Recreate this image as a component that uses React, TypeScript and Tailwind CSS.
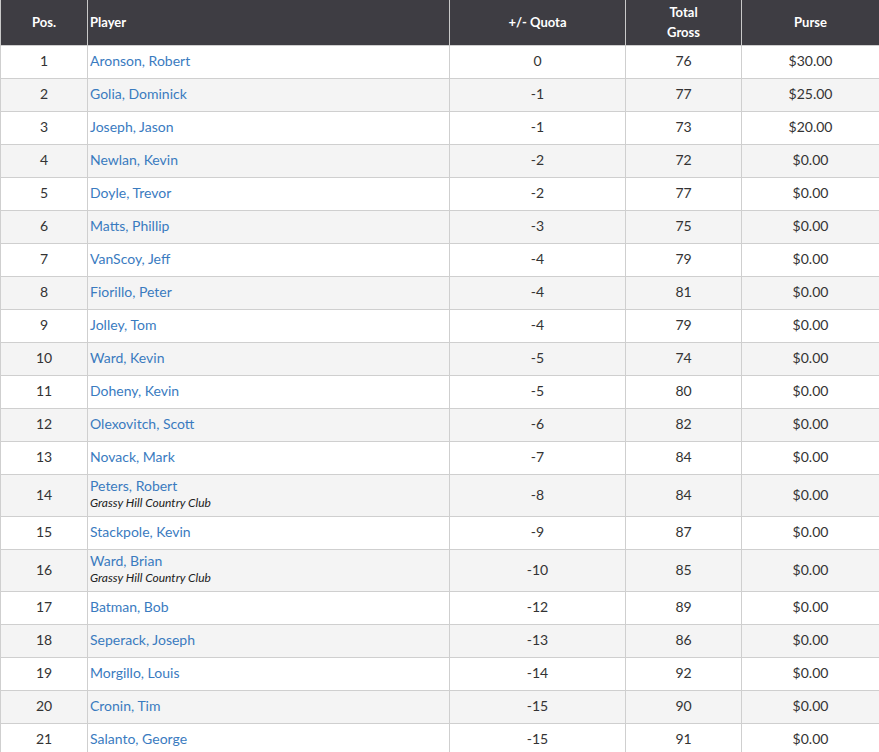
type Row = { pos: number; name: string; club?: string; quota: string; gross: number; purse: string };

const rows: Row[] = [
  { pos: 1, name: "Aronson, Robert", quota: "0", gross: 76, purse: "$30.00" },
  { pos: 2, name: "Golia, Dominick", quota: "-1", gross: 77, purse: "$25.00" },
  { pos: 3, name: "Joseph, Jason", quota: "-1", gross: 73, purse: "$20.00" },
  { pos: 4, name: "Newlan, Kevin", quota: "-2", gross: 72, purse: "$0.00" },
  { pos: 5, name: "Doyle, Trevor", quota: "-2", gross: 77, purse: "$0.00" },
  { pos: 6, name: "Matts, Phillip", quota: "-3", gross: 75, purse: "$0.00" },
  { pos: 7, name: "VanScoy, Jeff", quota: "-4", gross: 79, purse: "$0.00" },
  { pos: 8, name: "Fiorillo, Peter", quota: "-4", gross: 81, purse: "$0.00" },
  { pos: 9, name: "Jolley, Tom", quota: "-4", gross: 79, purse: "$0.00" },
  { pos: 10, name: "Ward, Kevin", quota: "-5", gross: 74, purse: "$0.00" },
  { pos: 11, name: "Doheny, Kevin", quota: "-5", gross: 80, purse: "$0.00" },
  { pos: 12, name: "Olexovitch, Scott", quota: "-6", gross: 82, purse: "$0.00" },
  { pos: 13, name: "Novack, Mark", quota: "-7", gross: 84, purse: "$0.00" },
  { pos: 14, name: "Peters, Robert", club: "Grassy Hill Country Club", quota: "-8", gross: 84, purse: "$0.00" },
  { pos: 15, name: "Stackpole, Kevin", quota: "-9", gross: 87, purse: "$0.00" },
  { pos: 16, name: "Ward, Brian", club: "Grassy Hill Country Club", quota: "-10", gross: 85, purse: "$0.00" },
  { pos: 17, name: "Batman, Bob", quota: "-12", gross: 89, purse: "$0.00" },
  { pos: 18, name: "Seperack, Joseph", quota: "-13", gross: 86, purse: "$0.00" },
  { pos: 19, name: "Morgillo, Louis", quota: "-14", gross: 92, purse: "$0.00" },
  { pos: 20, name: "Cronin, Tim", quota: "-15", gross: 90, purse: "$0.00" },
  { pos: 21, name: "Salanto, George", quota: "-15", gross: 91, purse: "$0.00" },
];

const App = () => {
  return (
    <div className="bg-white font-['Lato',sans-serif] text-[14px] text-[#333]">
      <table className="w-[879px] border-collapse table-fixed">
        <colgroup>
          <col className="w-[87px]" />
          <col className="w-[362px]" />
          <col className="w-[176px]" />
          <col className="w-[116px]" />
          <col className="w-[138px]" />
        </colgroup>
        <thead>
          <tr className="h-[45px] bg-[#3e3d43] text-white text-[13px] font-bold leading-[20px]">
            <th className="border-x border-[#c9c9c9] text-center">Pos.</th>
            <th className="border-x border-[#c9c9c9] text-left px-[2px]">Player</th>
            <th className="border-x border-[#c9c9c9] text-center">+/- Quota</th>
            <th className="border-x border-[#c9c9c9] text-center">
              Total
              <br />
              Gross
            </th>
            <th className="border-x border-[#c9c9c9] text-center">Purse</th>
          </tr>
        </thead>
        <tbody>
          {rows.map((r) => (
            <tr
              key={r.pos}
              className={`${r.club ? "h-[42px]" : "h-[33px]"} ${r.pos % 2 === 0 ? "bg-[#f4f4f4]" : "bg-white"}`}
            >
              <td className="border border-[#cfcfcf] text-center pb-[2px]">{r.pos}</td>
              <td className="border border-[#cfcfcf] px-[2px] pb-[2px] leading-[17px]">
                <div className="text-[#3a7bbf]">{r.name}</div>
                {r.club && <div className="text-[12px] italic text-[#222]">{r.club}</div>}
              </td>
              <td className="border border-[#cfcfcf] text-center pb-[2px]">{r.quota}</td>
              <td className="border border-[#cfcfcf] text-center pb-[2px]">{r.gross}</td>
              <td className="border border-[#cfcfcf] text-center pb-[2px]">{r.purse}</td>
            </tr>
          ))}
        </tbody>
      </table>
    </div>
  );
};

export default App;
